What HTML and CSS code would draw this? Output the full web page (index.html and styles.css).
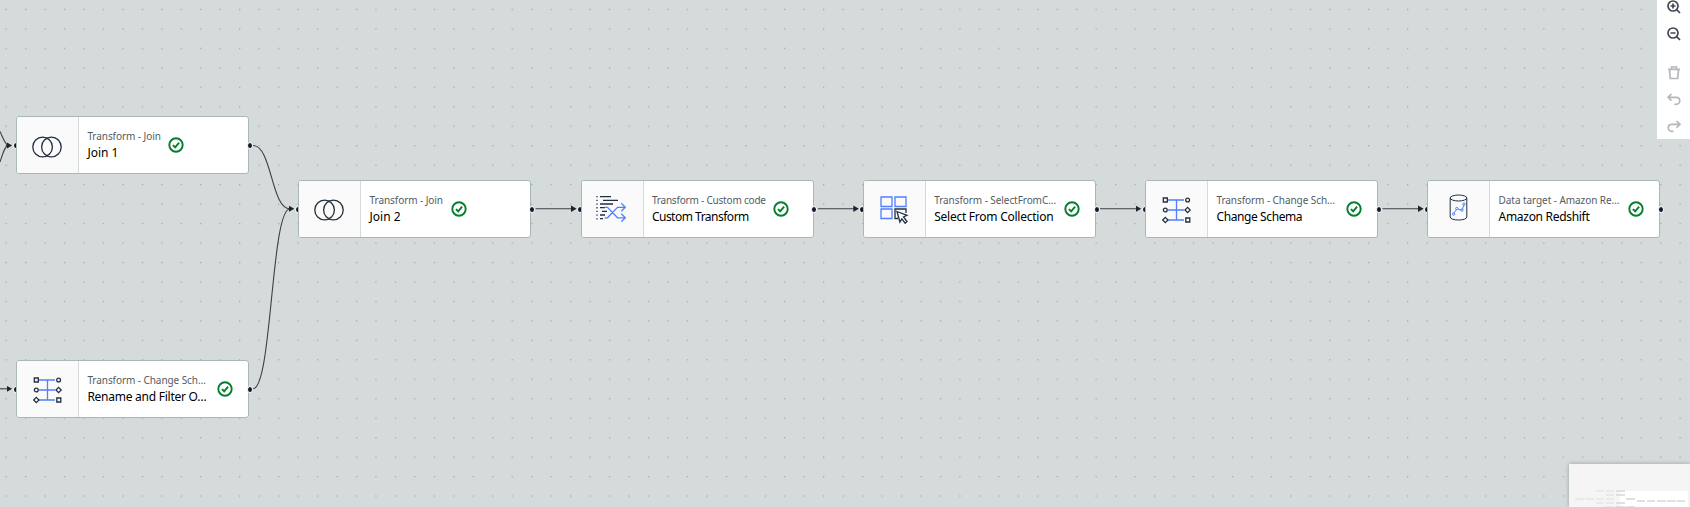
FILE: index.html
```html
<!DOCTYPE html>
<html lang="en">
<head>
<meta charset="utf-8">
<title>Visual job editor</title>
<link rel="stylesheet" href="styles.css">
</head>
<body>
<svg class="defs" aria-hidden="true">
  <symbol id="check" viewBox="0 0 16 16"><circle cx="8" cy="8" r="6.7"/><path d="M4.9 8.1 7.2 10.3 11.1 5.7"/></symbol>
  <symbol id="join" viewBox="0 0 30 22"><circle cx="10.600" cy="11" r="9.800"/><circle cx="19.400" cy="11" r="9.800"/></symbol>
  <symbol id="schema" viewBox="0 0 30 28">
    <path class="blue" d="M6 4H22M6 14H22M6 24H22M14.5 4V24"/>
    <path d="M1.3 2H5.3V6H1.3ZM23.8 22H27.8V26H23.8Z"/>
    <circle cx="25.600" cy="4" r="1.900"/><circle cx="3.300" cy="14" r="1.900"/><path d="M25.6 11.4 28.2 14 25.6 16.6 23 14ZM3.3 21.4 5.9 24 3.3 26.6.7 24Z"/>
  </symbol>
</svg>
<main class="canvas">
  <svg class="edges" width="1690" height="507" viewBox="0 0 1690 507">
    <defs>
      <pattern id="dots" x="5.5" y="8.8" width="19.465" height="19.465" patternUnits="userSpaceOnUse"><rect class="dot" width="1.3" height="1.3"/></pattern>
      <marker id="arrow" markerWidth="7" markerHeight="8" refX="1" refY="4" orient="auto" markerUnits="userSpaceOnUse"><path class="tip" d="M0 .8 5.600 4 0 7.2Z"/></marker>
    </defs>
    <rect width="1690" height="507" fill="url(#dots)"/>
    <g class="wires">
      <path d="M0 131.500C3 138 5 144 8 145.500"/>
      <path d="M0 162C3 153 5 146 8 145.500"/>
      <path marker-end="url(#arrow)" d="M6 145.500H7.500"/>
      <path marker-end="url(#arrow)" d="M0 388.800H7.500"/>
      <path d="M253 145.500C272 145.500 271 208.800 290 208.800"/>
      <path d="M253 388.800C272 388.800 271 208.800 290 208.800"/>
      <path marker-end="url(#arrow)" d="M288 208.800H289.700"/>
      <path marker-end="url(#arrow)" d="M535.500 208.800H572"/>
      <path marker-end="url(#arrow)" d="M818 208.800H854.300"/>
      <path marker-end="url(#arrow)" d="M1100 208.800H1136.600"/>
      <path marker-end="url(#arrow)" d="M1382.500 208.800H1419"/>
    </g>
  </svg>

  <article class="node join-1"><i class="port in"></i><i class="port out"></i>
    <div class="body"><div class="icon"><svg class="ico-join"><use href="#join"/></svg></div>
    <div class="label"><span class="type">Transform - Join</span><span class="name">Join 1</span></div><svg class="status"><use href="#check"/></svg></div></article>
  <article class="node rename"><i class="port in"></i><i class="port out"></i>
    <div class="body"><div class="icon"><svg class="ico-schema"><use href="#schema"/></svg></div>
    <div class="label full"><span class="type">Transform - Change Sch…</span><span class="name">Rename and Filter O…</span></div><svg class="status"><use href="#check"/></svg></div></article>
  <article class="node join-2"><i class="port in"></i><i class="port out"></i>
    <div class="body"><div class="icon"><svg class="ico-join"><use href="#join"/></svg></div>
    <div class="label"><span class="type">Transform - Join</span><span class="name">Join 2</span></div><svg class="status"><use href="#check"/></svg></div></article>
  <article class="node custom"><i class="port in"></i><i class="port out"></i>
    <div class="body"><div class="icon"><svg class="ico-code" viewBox="0 0 31 28">
      <path class="thin" d="M1 1V26" stroke-dasharray="1.300 2.400"/>
      <path d="M4 1.700H15M7 5.300H22M4 9H17M4 12.700H9M6 16.300H11M4 20H9M4 23.700H7"/>
      <path class="blue" d="M8.500 12.300H11.500L21.500 22.800H29M8.500 22.800H11.500L21.500 12.300H29M25.300 8.300 29.300 12.300 25.300 16.300M25.300 18.800 29.300 22.800 25.300 26.800"/>
    </svg></div>
    <div class="label"><span class="type">Transform - Custom code</span><span class="name">Custom Transform</span></div><svg class="status"><use href="#check"/></svg></div></article>
  <article class="node select"><i class="port in"></i><i class="port out"></i>
    <div class="body"><div class="icon"><svg class="ico-select" viewBox="0 0 29 29">
      <path class="blue" d="M1 1H12V10.500H1ZM15 1H26V10.500H15ZM1 13H12V22.500H1Z"/>
      <path d="M18 22.500H15V13H26V17"/><path class="cursor" d="M17 15.500 27 19.300 23.500 21 27 25.500 25.200 27.200 21.800 22.800 19.900 26Z"/>
    </svg></div>
    <div class="label full"><span class="type">Transform - SelectFromC…</span><span class="name">Select From Collection</span></div><svg class="status"><use href="#check"/></svg></div></article>
  <article class="node change"><i class="port in"></i><i class="port out"></i>
    <div class="body"><div class="icon"><svg class="ico-schema"><use href="#schema"/></svg></div>
    <div class="label full"><span class="type">Transform - Change Sch…</span><span class="name">Change Schema</span></div><svg class="status"><use href="#check"/></svg></div></article>
  <article class="node redshift"><i class="port in"></i><i class="port out"></i>
    <div class="body"><div class="icon"><svg class="ico-db" viewBox="0 0 19 27">
      <ellipse cx="9.500" cy="4" rx="8.300" ry="3"/><path d="M1.200 4V23C1.200 27 17.800 27 17.800 23V4"/>
      <g class="blue"><path d="M5 19 7.500 15.500M8.800 15 12 16M13.500 15 14.800 11"/><circle cx="4.600" cy="20" r="1.200"/><circle cx="7.800" cy="14.500" r="1.200"/><circle cx="12.900" cy="16" r="1.200"/><circle cx="15" cy="10.200" r="1.200"/></g>
    </svg></div>
    <div class="label full"><span class="type">Data target - Amazon Re…</span><span class="name">Amazon Redshift</span></div><svg class="status"><use href="#check"/></svg></div></article>

  <nav class="toolbar">
    <svg viewBox="0 0 16 16"><circle cx="7" cy="7" r="5"/><path d="M10.700 10.700 14 14M7 4.500V9.500M4.500 7H9.500"/></svg>
    <svg viewBox="0 0 16 16"><circle cx="7" cy="7" r="5"/><path d="M10.700 10.700 14 14M4.500 7H9.500"/></svg>
    <svg class="off gap" viewBox="0 0 16 16"><path d="M2 4.300H14M5.500 4V2H10.500V4M3.500 4.500 4.300 13.500H11.700L12.500 4.500"/></svg>
    <svg class="off" viewBox="0 0 16 16"><path d="M5.500 2 2 5.300 5.500 8.600M2.200 5.300H10C15 5.300 15 12.300 10 12.300H8.500"/></svg>
    <svg class="off" viewBox="0 0 16 16"><path d="M10.500 2 14 5.300 10.500 8.600M13.800 5.300H6C1 5.300 1 12.300 6 12.300H7.500"/></svg>
  </nav>
  <aside class="minimap">
    <svg width="121" height="43" viewBox="0 0 121 43">
      <rect class="view" x="51" y="27" width="68" height="16"/>
      <path class="faint" d="M6 35H15M16 35H25M27 27H35M37 27H45M37 31H45M27 35H35M37 35H45M27 39H35M37 39H45M37 43H45"/>
      <path class="bar" d="M47 27H56M47 31H56M57 35H66M47 39H56M47 43H56M57 43H66M68 37H76M78 37H86M88 37H97M98 37H107M108 37H116"/>
    </svg>
  </aside>
</main>
</body>
</html>
```
FILE: styles.css
```css
body { margin: 0; font-family: "Noto Sans", "Open Sans", sans-serif; }
.defs { position: absolute; width: 0; height: 0; }
.canvas { position: relative; width: 1690px; height: 507px; overflow: hidden; background: #d5dbdb; }
.edges { display: block; }
.dot { fill: #a1abab; }
.wires { fill: none; stroke: #3a4145; stroke-width: 1.1; }
.tip { fill: #1d242b; stroke: none; }
.node { position: absolute; width: 233px; height: 57.5px; }
.join-1 { left: 16.2px; top: 116.4px; }
.rename { left: 16.2px; top: 360px; }
.join-2 { left: 298.4px; top: 180px; }
.custom { left: 580.7px; top: 180px; }
.select { left: 863px; top: 180px; }
.change { left: 1145.3px; top: 180px; }
.redshift { left: 1427.4px; top: 180px; }
.port { position: absolute; top: 26px; width: 4px; height: 5px; border: 1px solid #f4f6f6; border-radius: 50%; background: #16162a; }
.in { left: -3.7px; }
.out { left: 230.7px; z-index: 1; }
.body { position: relative; display: flex; align-items: center; box-sizing: border-box; height: 100%; border: 1px solid #aab7b8; border-radius: 3px; background: #fff; }
.icon { display: flex; flex: none; align-items: center; justify-content: center; width: 61px; height: 100%; border-right: 1px solid #d5dbdb; border-radius: 2px 0 0 2px; background: #fafafa; }
.icon svg { fill: none; stroke: #232f3e; stroke-width: 1.3; }
.icon .blue, .blue { stroke: #527fff; }
.ico-join { width: 30px; height: 22px; margin: 3px 1.5px 0 0; }
.ico-schema { width: 30px; height: 28px; margin-top: 2px; }
.ico-code { width: 31px; height: 28px; margin: 1px 1px 0 0; }
.ico-select { width: 29px; height: 29px; margin-top: 3px; }
.icon .ico-db { width: 19px; height: 27px; margin-top: -2px; stroke-width: 1; }
.cursor { fill: #fff; }
.label { display: flex; flex: none; flex-direction: column; margin-left: 8.2px; white-space: nowrap; }
.full { width: 121.8px; }
.type { height: 16px; line-height: 16px; font-size: 10px; letter-spacing: -.07px; color: #545b64; }
.name { height: 18px; line-height: 18.6px; font-size: 12px; color: #000; }
.custom .type { letter-spacing: -.2px; }
.custom .name { letter-spacing: -.5px; }
.select .name, .rename .name { letter-spacing: -.25px; }
.change .name { letter-spacing: -.4px; }
.redshift .name { letter-spacing: -.3px; }
.status { flex: none; width: 16px; height: 16px; margin-left: 7.6px; fill: none; stroke: #037f2c; stroke-width: 1.9; }
.toolbar { position: absolute; top: 0; right: 0; display: flex; flex-direction: column; align-items: center; box-sizing: border-box; width: 33px; height: 139px; padding-left: 1px; background: #fff; }
.toolbar svg { flex: none; width: 16px; height: 16px; margin-bottom: 11.1px; fill: none; stroke: #424752; stroke-width: 1.7; }
.toolbar svg:first-child { margin-top: -1px; }
.toolbar .gap { margin-top: 11.5px; }
.toolbar .off { stroke: #b5b7bc; }
.minimap { position: absolute; right: 0; bottom: 0; height: 43px; background: #f5f5f5; box-shadow: 0 0 4px rgba(0, 28, 36, .3); }
.view { fill: #fff; }
.faint, .bar { fill: none; stroke-width: 2; }
.faint { stroke: #e9e9e9; }
.bar { stroke: #e0e0e0; }
```
